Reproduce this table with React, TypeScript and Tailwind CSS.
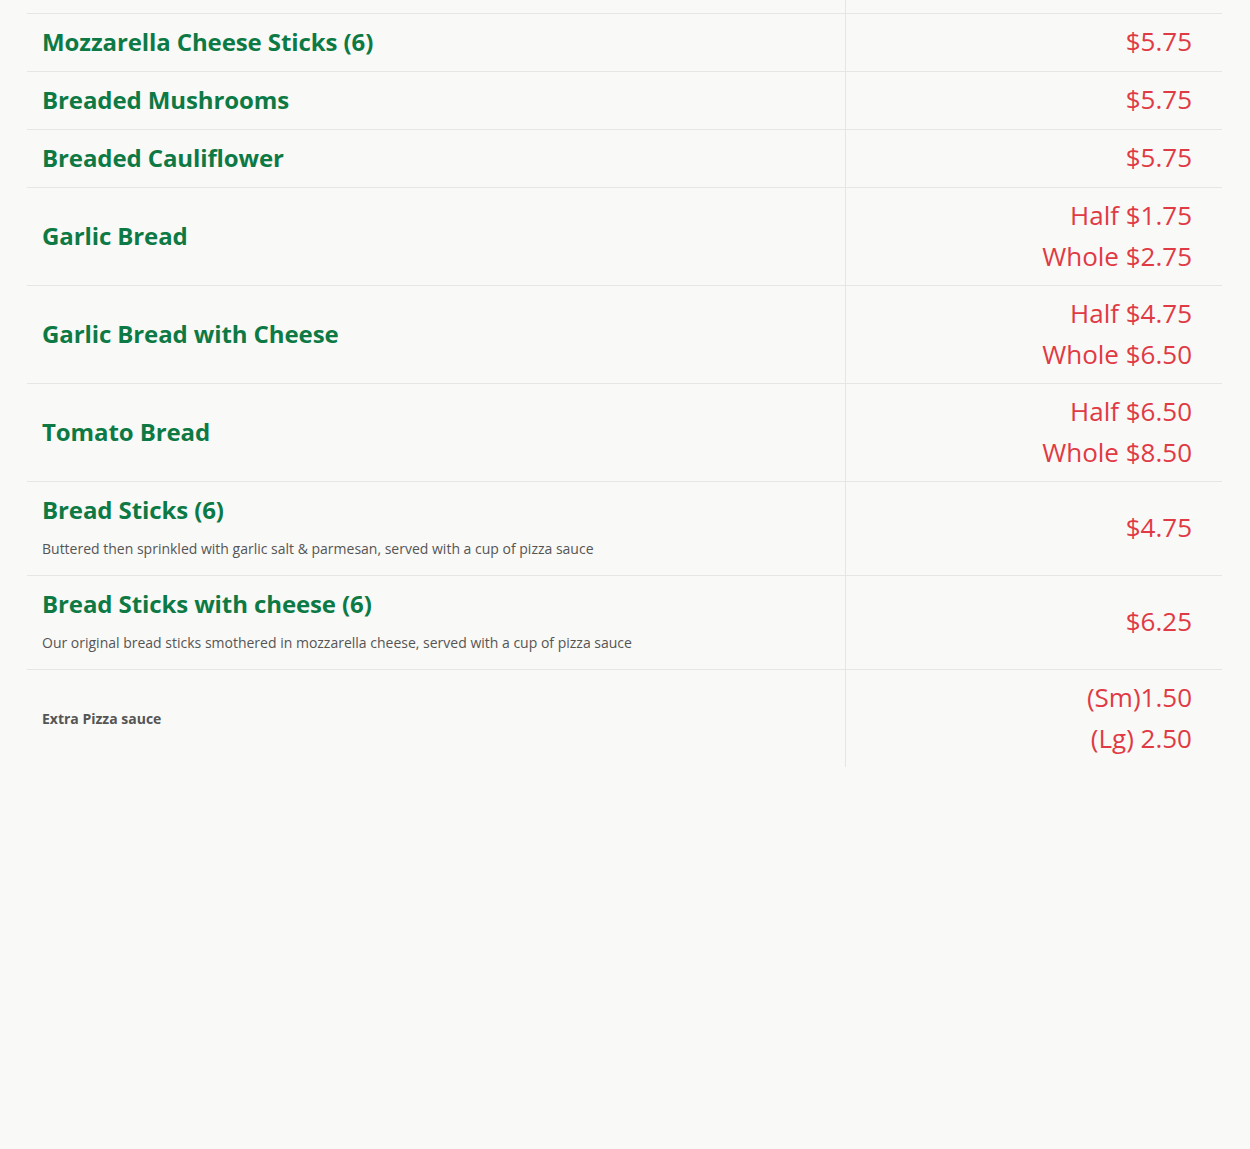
import React from 'react';

interface MenuItem {
  name: string;
  description?: string;
  prices: string[];
  small?: boolean;
}

const items: MenuItem[] = [
  { name: 'Onion Rings', prices: ['$5.75'] },
  { name: 'Mozzarella Cheese Sticks (6)', prices: ['$5.75'] },
  { name: 'Breaded Mushrooms', prices: ['$5.75'] },
  { name: 'Breaded Cauliflower', prices: ['$5.75'] },
  { name: 'Garlic Bread', prices: ['Half $1.75', 'Whole $2.75'] },
  { name: 'Garlic Bread with Cheese', prices: ['Half $4.75', 'Whole $6.50'] },
  { name: 'Tomato Bread', prices: ['Half $6.50', 'Whole $8.50'] },
  {
    name: 'Bread Sticks (6)',
    description: 'Buttered then sprinkled with garlic salt & parmesan, served with a cup of pizza sauce',
    prices: ['$4.75'],
  },
  {
    name: 'Bread Sticks with cheese (6)',
    description: 'Our original bread sticks smothered in mozzarella cheese, served with a cup of pizza sauce',
    prices: ['$6.25'],
  },
  { name: 'Extra Pizza sauce', prices: ['(Sm)1.50', '(Lg) 2.50'], small: true },
];

const MenuRow: React.FC<{ item: MenuItem; last: boolean }> = ({ item, last }) => {
  const multi = item.prices.length > 1;
  return (
    <div className={`flex ${last ? '' : 'border-b border-[#e6e6e4]'}`}>
      {/* Name + description */}
      <div className="w-[819px] border-r border-[#e6e6e4] pl-[15px] pr-4 py-2 flex flex-col justify-center">
        {item.small ? (
          <div className="text-[14px] font-bold text-[#555555]">{item.name}</div>
        ) : (
          <div className="text-[24px] leading-[39px] pb-[2px] font-bold tracking-[-0.1px] text-[#0d7a45]">
            {item.name}
          </div>
        )}
        {item.description && (
          <p className="mt-2 mb-2 text-[14px] leading-[20px] text-[#555555]">{item.description}</p>
        )}
      </div>
      {/* Prices */}
      <div className="flex-1 pr-[30px] pt-[7px] pb-[9px] flex flex-col justify-center items-end">
        {item.prices.map((p) => (
          <div key={p} className={`text-[26px] text-[#e03a44] ${multi ? 'leading-[40.5px]' : 'leading-[41px]'}`}>
            {p}
          </div>
        ))}
      </div>
    </div>
  );
};

const App: React.FC = () => {
  return (
    <div className="min-h-[1149px] bg-[#f9f9f7] font-['Open_Sans',sans-serif] overflow-hidden">
      <div className="ml-[27px] w-[1195px] -mt-[44px]">
        {items.map((item, i) => (
          <MenuRow key={item.name} item={item} last={i === items.length - 1} />
        ))}
      </div>
    </div>
  );
};

export default App;
